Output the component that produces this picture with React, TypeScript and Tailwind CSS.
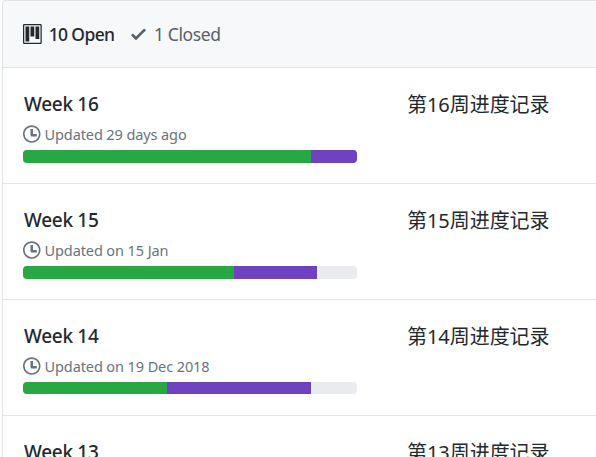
type Milestone = {
  title: string;
  note: string;
  updated?: string;
  done?: number;
  progress?: number;
  barClass?: string;
};

const projects: Milestone[] = [
  { title: 'Week 16', updated: 'Updated 29 days ago', note: '第16周进度记录', done: 288, progress: 46 },
  { title: 'Week 15', updated: 'Updated on 15 Jan', note: '第15周进度记录', done: 211, progress: 83 },
  { title: 'Week 14', updated: 'Updated on 19 Dec 2018', note: '第14周进度记录', done: 144, progress: 144, barClass: 'h-3' },
  { title: 'Week 13', note: '第13周进度记录' },
];

const TRACK = 334;

function ProjectIcon() {
  return (
    <svg className="h-5 w-[18.75px] shrink-0" viewBox="0 0 15 16" fill="currentColor" fillRule="evenodd">
      <path d="M10 12h3V2h-3v10zm-4-2h3V2H6v8zm-4 4h3V2H2v12zm-1 1h13V1H1v14zM14 0H1a1 1 0 0 0-1 1v14a1 1 0 0 0 1 1h13a1 1 0 0 0 1-1V1a1 1 0 0 0-1-1z" />
    </svg>
  );
}

function CheckIcon() {
  return (
    <svg className="h-5 w-[15px] shrink-0" viewBox="0 0 12 16" fill="currentColor">
      <path d="M12 5l-8 8-4-4 1.5-1.5L4 10l6.5-6.5L12 5z" />
    </svg>
  );
}

function ClockIcon() {
  return (
    <svg className="h-5 w-[17.5px] shrink-0" viewBox="0 0 14 16" fill="currentColor" fillRule="evenodd">
      <path d="M8 8h3v2H7c-.55 0-1-.45-1-1V4h2v4zM7 2.3c3.14 0 5.7 2.56 5.7 5.7s-2.56 5.7-5.7 5.7A5.71 5.71 0 0 1 1.3 8c0-3.14 2.56-5.7 5.7-5.7zM7 1C3.14 1 0 4.14 0 8s3.14 7 7 7 7-3.14 7-7-3.14-7-7-7z" />
    </svg>
  );
}

function Row({ item }: { item: Milestone }) {
  return (
    <li className="flex h-[116px] border-b border-[#e1e4e8] pl-5">
      <div className="w-[384px] shrink-0 pt-[21px]">
        <h4 className="h-[30px] pl-px whitespace-nowrap text-[19px] leading-[30px] font-medium tracking-[-0.3px] text-[#24292e]">
          {item.title}
        </h4>
        {item.updated && (
          <>
            <div className="mt-[5px] flex h-5 items-center gap-[4px] text-[#6a737d]">
              <ClockIcon />
              <span className="whitespace-nowrap text-[14.5px] leading-5 tracking-[-0.1px]">{item.updated}</span>
            </div>
            <div className={`mt-[6px] flex w-[334px] overflow-hidden rounded-[4px] bg-[#eaebef] ${item.barClass ?? 'h-[13px]'}`}>
              <span className="bg-[#28a745]" style={{ width: `${((item.done ?? 0) / TRACK) * 100}%` }} />
              <span className="bg-[#6f42c1]" style={{ width: `${((item.progress ?? 0) / TRACK) * 100}%` }} />
            </div>
          </>
        )}
      </div>
      <p className="pt-[22px] font-['Noto_Sans','Noto_Sans_CJK_SC',sans-serif] text-[20px] leading-[30px] font-normal tracking-[-0.05px] whitespace-nowrap text-[#24292e]">
        {item.note}
      </p>
    </li>
  );
}

export default function App() {
  return (
    <main className="h-[457px] w-[596px] overflow-hidden bg-white pl-[2px] font-['Noto_Sans','Noto_Sans_CJK_SC',sans-serif]">
      <section className="w-[620px] rounded-tl-[4px] border-t border-l border-[#e1e4e8]">
        <header className="flex h-[67px] items-center rounded-tl-[3px] border-b border-[#e1e4e8] bg-[#f6f8fa] pl-5 text-[17.5px] leading-[26px]">
          <div className="flex w-[108px] items-center gap-[7px] text-[#24292e]">
            <ProjectIcon />
            <span className="whitespace-nowrap font-medium tracking-[-0.65px]">10 Open</span>
          </div>
          <div className="flex items-center gap-[8px] text-[#586069]">
            <CheckIcon />
            <span className="whitespace-nowrap tracking-[-0.4px]">1 Closed</span>
          </div>
        </header>
        <ul>
          {projects.map((item) => (
            <Row key={item.title} item={item} />
          ))}
        </ul>
      </section>
    </main>
  );
}
